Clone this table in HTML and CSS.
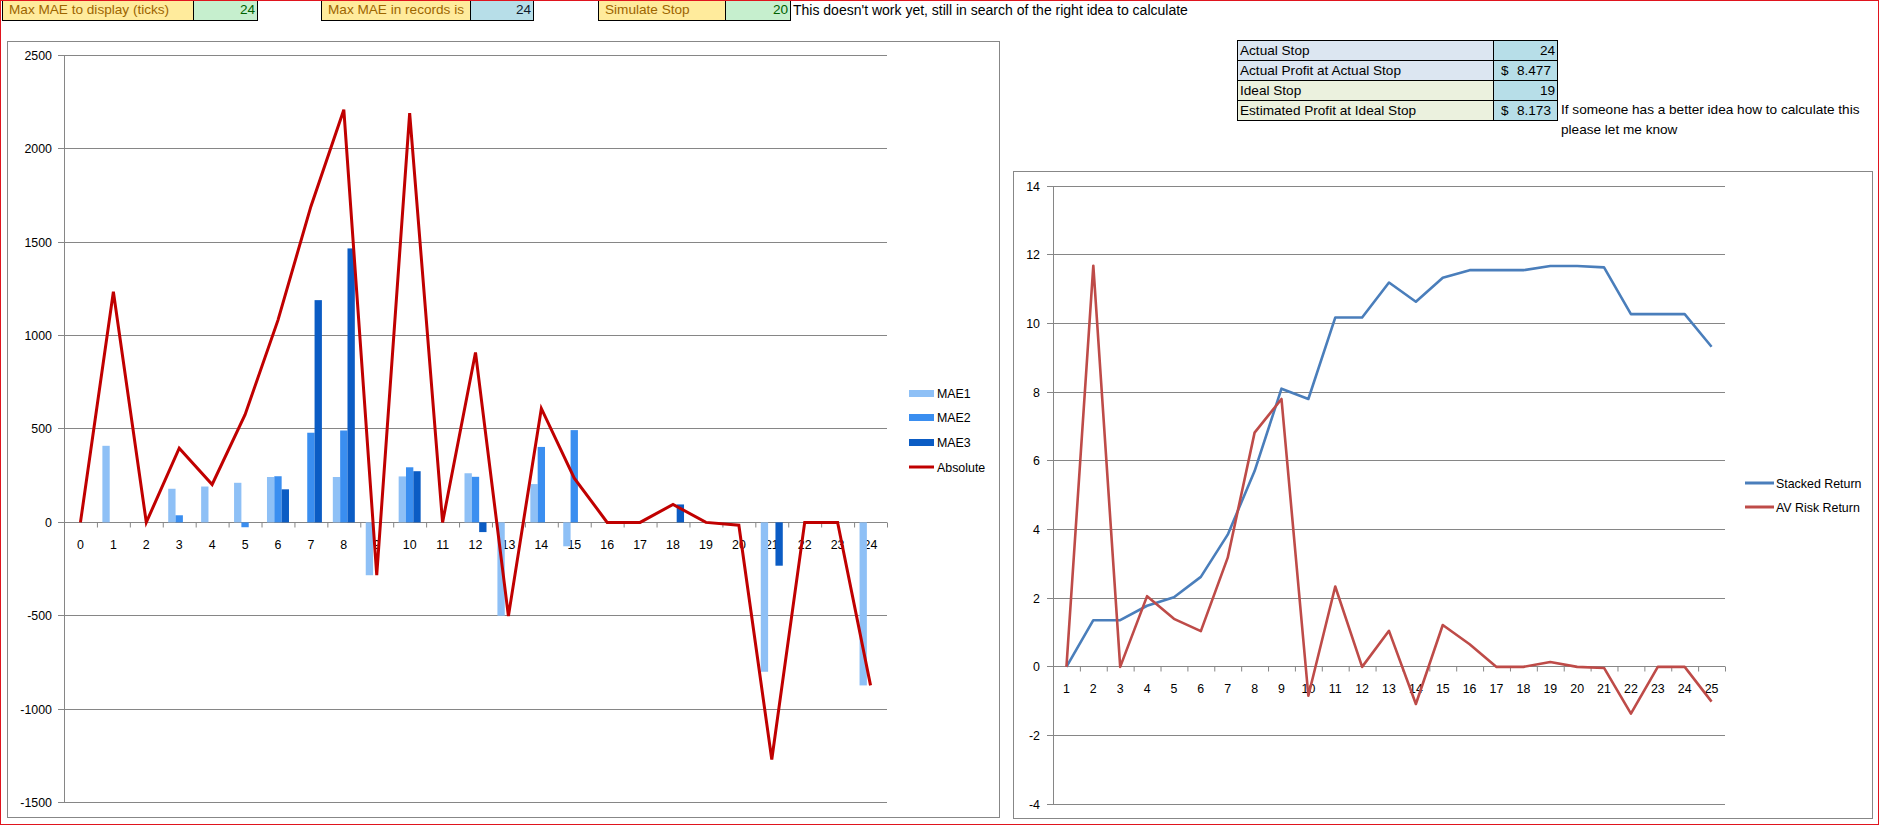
FILE: index.html
```html
<!DOCTYPE html>
<html>
<head>
<meta charset="utf-8">
<link rel="stylesheet" href="styles.css">
</head>
<body>
<div class="page">
  <div class="toprow">
    <div class="grp g1">
      <div class="cell lbl w1">Max MAE to display (ticks)</div>
      <div class="cell val good w2">24</div>
    </div>
    <div class="grp g2">
      <div class="cell lbl w3">Max MAE in records is</div>
      <div class="cell val info w4">24</div>
    </div>
    <div class="grp g3">
      <div class="cell lbl w5">Simulate Stop</div>
      <div class="cell val good w6">20</div>
    </div>
    <div class="remark">This doesn't work yet, still in search of the right idea to calculate</div>
  </div>

  <div class="main">
    <svg class="chart chart1" width="993" height="777" viewBox="0 0 993 777">
      <rect class="frame" x="0.5" y="0.5" width="992" height="776"/>
      <path class="grid" d="M51 14.5H880M51 107.5H880M51 201.5H880M51 294.5H880M51 387.5H880M51 481.5H880M51 574.5H880M51 668.5H880M51 761.5H880M57.5 14.5V761.5"/>
      <line class="ticks" x1="57" y1="484" x2="882" y2="484" stroke-dasharray="1 31.92"/>
      <g class="ylab">
        <text x="45" y="19">2500</text>
        <text x="45" y="112">2000</text>
        <text x="45" y="206">1500</text>
        <text x="45" y="299">1000</text>
        <text x="45" y="392">500</text>
        <text x="45" y="486">0</text>
        <text x="45" y="579">-500</text>
        <text x="45" y="673">-1000</text>
        <text x="45" y="766">-1500</text>
      </g>
      <g class="xlab">
        <text x="73.5" y="507.5">0</text><text x="106.4" y="507.5">1</text><text x="139.3" y="507.5">2</text>
        <text x="172.2" y="507.5">3</text><text x="205.1" y="507.5">4</text><text x="238.1" y="507.5">5</text>
        <text x="271" y="507.5">6</text><text x="303.9" y="507.5">7</text><text x="336.8" y="507.5">8</text>
        <text x="369.7" y="507.5">9</text><text x="402.7" y="507.5">10</text><text x="435.6" y="507.5">11</text>
        <text x="468.5" y="507.5">12</text><text x="501.4" y="507.5">13</text><text x="534.3" y="507.5">14</text>
        <text x="567.3" y="507.5">15</text><text x="600.2" y="507.5">16</text><text x="633.1" y="507.5">17</text>
        <text x="666" y="507.5">18</text><text x="698.9" y="507.5">19</text><text x="731.9" y="507.5">20</text>
        <text x="764.8" y="507.5">21</text><text x="797.7" y="507.5">22</text><text x="830.6" y="507.5">23</text>
        <text x="863.5" y="507.5">24</text>
      </g>
      <g transform="translate(57 481.375) scale(32.92 -0.18675)">
        <g class="b1">
          <rect x="1.1658" y="0" width="0.2228" height="410"/>
          <rect x="3.1658" y="0" width="0.2228" height="180"/>
          <rect x="4.1658" y="0" width="0.2228" height="192"/>
          <rect x="5.1658" y="0" width="0.2228" height="212"/>
          <rect x="6.1658" y="0" width="0.2228" height="243"/>
          <rect x="8.1658" y="0" width="0.2228" height="243"/>
          <rect x="9.1658" y="-283" width="0.2228" height="283"/>
          <rect x="10.1658" y="0" width="0.2228" height="246"/>
          <rect x="12.1658" y="0" width="0.2228" height="263"/>
          <rect x="13.1658" y="-500" width="0.2228" height="500"/>
          <rect x="14.1658" y="0" width="0.2228" height="205"/>
          <rect x="15.1658" y="-128" width="0.2228" height="128"/>
          <rect x="21.1658" y="-800" width="0.2228" height="800"/>
          <rect x="24.1658" y="-873" width="0.2228" height="873"/>
        </g>
        <g class="b2">
          <rect x="3.3886" y="0" width="0.2228" height="38"/>
          <rect x="5.3886" y="-26" width="0.2228" height="26"/>
          <rect x="6.3886" y="0" width="0.2228" height="247"/>
          <rect x="7.3886" y="0" width="0.2228" height="480"/>
          <rect x="8.3886" y="0" width="0.2228" height="492"/>
          <rect x="10.3886" y="0" width="0.2228" height="295"/>
          <rect x="12.3886" y="0" width="0.2228" height="244"/>
          <rect x="14.3886" y="0" width="0.2228" height="404"/>
          <rect x="15.3886" y="0" width="0.2228" height="494"/>
        </g>
        <g class="b3">
          <rect x="6.6114" y="0" width="0.2228" height="177"/>
          <rect x="7.6114" y="0" width="0.2228" height="1190"/>
          <rect x="8.6114" y="0" width="0.2228" height="1467"/>
          <rect x="10.6114" y="0" width="0.2228" height="274"/>
          <rect x="12.6114" y="-52" width="0.2228" height="52"/>
          <rect x="18.6114" y="0" width="0.2228" height="96"/>
          <rect x="21.6114" y="-232" width="0.2228" height="232"/>
        </g>
        <polyline class="absline" points="0.5,0 1.5,1235 2.5,0 3.5,397 4.5,203 5.5,577 6.5,1083 7.5,1692 8.5,2210 9.5,-282 10.5,2192 11.5,0 12.5,910 13.5,-502 14.5,610 15.5,237 16.5,0 17.5,0 18.5,96 19.5,0 20.5,-15 21.5,-1270 22.5,0 23.5,0 24.5,-873"/>
      </g>
      <g class="legend">
        <rect class="b1" x="902" y="349" width="25" height="7"/>
        <text x="930" y="356.5">MAE1</text>
        <rect class="b2" x="902" y="373" width="25" height="7"/>
        <text x="930" y="380.5">MAE2</text>
        <rect class="b3" x="902" y="398" width="25" height="7"/>
        <text x="930" y="405.5">MAE3</text>
        <line class="abslegend" x1="902" y1="426" x2="927" y2="426"/>
        <text x="930" y="430.5">Absolute</text>
      </g>
    </svg>

    <div class="side">
      <div class="statsrow">
        <div class="stats">
          <div class="sc slbl blue">Actual Stop</div>
          <div class="sc sval">24</div>
          <div class="sc slbl blue">Actual Profit at Actual Stop</div>
          <div class="sc sval money"><span>$</span><span>8.477</span></div>
          <div class="sc slbl green">Ideal Stop</div>
          <div class="sc sval">19</div>
          <div class="sc slbl green">Estimated Profit at Ideal Stop</div>
          <div class="sc sval money"><span>$</span><span>8.173</span></div>
        </div>
        <div class="note">If someone has a better idea how to calculate this<br>please let me know</div>
      </div>

      <svg class="chart chart2" width="860" height="648" viewBox="0 0 860 648">
        <rect class="frame" x="0.5" y="0.5" width="859" height="647"/>
        <path class="grid" d="M34 15.5H712M34 83.5H712M34 152.5H712M34 221.5H712M34 289.5H712M34 358.5H712M34 427.5H712M34 495.5H712M34 564.5H712M34 633.5H712M40.5 15.5V633.5"/>
        <line class="ticks" x1="40" y1="498" x2="713" y2="498" stroke-dasharray="1 25.88"/>
        <g class="ylab">
          <text x="27" y="20">14</text>
          <text x="27" y="88">12</text>
          <text x="27" y="157">10</text>
          <text x="27" y="226">8</text>
          <text x="27" y="294">6</text>
          <text x="27" y="363">4</text>
          <text x="27" y="432">2</text>
          <text x="27" y="500">0</text>
          <text x="27" y="569">-2</text>
          <text x="27" y="638">-4</text>
        </g>
        <g class="xlab">
          <text x="53.4" y="521.5">1</text><text x="80.3" y="521.5">2</text><text x="107.2" y="521.5">3</text>
          <text x="134.1" y="521.5">4</text><text x="161" y="521.5">5</text><text x="187.8" y="521.5">6</text>
          <text x="214.7" y="521.5">7</text><text x="241.6" y="521.5">8</text><text x="268.5" y="521.5">9</text>
          <text x="295.4" y="521.5">10</text><text x="322.2" y="521.5">11</text><text x="349.1" y="521.5">12</text>
          <text x="376" y="521.5">13</text><text x="402.9" y="521.5">14</text><text x="429.8" y="521.5">15</text>
          <text x="456.6" y="521.5">16</text><text x="483.5" y="521.5">17</text><text x="510.4" y="521.5">18</text>
          <text x="537.3" y="521.5">19</text><text x="564.2" y="521.5">20</text><text x="591" y="521.5">21</text>
          <text x="617.9" y="521.5">22</text><text x="644.8" y="521.5">23</text><text x="671.7" y="521.5">24</text>
          <text x="698.6" y="521.5">25</text>
        </g>
        <g transform="translate(40 495.9) scale(26.88 -34.35)">
          <polyline class="stacked" points="0.5,0 1.5,1.36 2.5,1.36 3.5,1.78 4.5,2.03 5.5,2.62 6.5,3.85 7.5,5.7 8.5,8.1 9.5,7.8 10.5,10.17 11.5,10.17 12.5,11.19 13.5,10.63 14.5,11.33 15.5,11.55 16.5,11.55 17.5,11.55 18.5,11.67 19.5,11.67 20.5,11.63 21.5,10.27 22.5,10.27 23.5,10.27 24.5,9.32"/>
          <polyline class="avrisk" points="0.5,0 1.5,11.68 2.5,0 3.5,2.06 4.5,1.4 5.5,1.04 6.5,3.18 7.5,6.82 8.5,7.8 9.5,-0.84 10.5,2.34 11.5,0 12.5,1.05 13.5,-1.08 14.5,1.22 15.5,0.66 16.5,0 17.5,0 18.5,0.14 19.5,0 20.5,-0.03 21.5,-1.36 22.5,0 23.5,0 24.5,-1.01"/>
        </g>
        <g class="legend">
          <line class="stackedleg" x1="732" y1="312" x2="761" y2="312"/>
          <text x="763" y="316.5">Stacked Return</text>
          <line class="avleg" x1="732" y1="336" x2="761" y2="336"/>
          <text x="763" y="340.5">AV Risk Return</text>
        </g>
      </svg>
    </div>
  </div>
</div>
</body>
</html>
```

FILE: styles.css
```css
body {
  margin: 0;
  background: #ffffff;
}

.page {
  position: relative;
  width: 1879px;
  height: 825px;
  overflow: hidden;
  background: #ffffff;
  font-family: "Liberation Sans", Arial, sans-serif;
  font-size: 13.6px;
  color: #000000;
}

.page::after {
  content: "";
  position: absolute;
  inset: 0;
  border: 1px solid #e0141e;
  pointer-events: none;
}

/* ---------- top row of spreadsheet cells ---------- */
.toprow {
  display: flex;
  align-items: flex-start;
  height: 21px;
}

.grp {
  display: flex;
  border-left: 1px solid #000000;
}

.g1 { margin-left: 2px; }
.g2 { margin-left: 63px; }
.g3 { margin-left: 64px; }

.cell {
  box-sizing: border-box;
  height: 21px;
  line-height: 20px;
  border-right: 1px solid #000000;
  border-bottom: 1px solid #000000;
  white-space: nowrap;
  overflow: hidden;
}

.lbl {
  background: #ffeb9c;
  color: #9c6500;
  padding-left: 6px;
}

.val {
  text-align: right;
  padding-right: 2px;
}

.good {
  background: #c6efce;
  color: #006100;
}

.info {
  background: #b7dee8;
  color: #0f1a2b;
}

.w1 { width: 191px; }
.w2 { width: 64px; }
.w3 { width: 149px; }
.w4 { width: 63px; }
.w5 { width: 127px; }
.w6 { width: 65px; }

.remark {
  margin-left: 2px;
  line-height: 20px;
  font-size: 14px;
  white-space: nowrap;
}

/* ---------- main area ---------- */
.main {
  display: flex;
  align-items: flex-start;
}

.chart {
  display: block;
  flex: none;
}

.chart1 {
  margin: 20px 0 0 7px;
}

.side {
  display: flex;
  flex-direction: column;
  margin: 19px 0 0 13px;
  width: 860px;
}

.statsrow {
  display: flex;
  align-items: flex-start;
  margin-left: 224px;
  height: 100px;
}

.stats {
  display: grid;
  grid-template-columns: 256px 64px;
  border-top: 1px solid #000000;
  border-left: 1px solid #000000;
}

.sc {
  box-sizing: border-box;
  height: 20px;
  line-height: 19px;
  border-right: 1px solid #000000;
  border-bottom: 1px solid #000000;
  white-space: nowrap;
}

.slbl {
  padding-left: 2px;
}

.blue { background: #dce6f1; }
.green { background: #ebf1de; }

.sval {
  background: #b7dee8;
  text-align: right;
  padding-right: 2px;
}

.money {
  display: flex;
  justify-content: space-between;
  padding-left: 7px;
  padding-right: 6px;
}

.note {
  margin-left: 3px;
  padding-top: 60px;
  line-height: 20px;
  white-space: nowrap;
}

.chart2 {
  margin-top: 31px;
}

/* ---------- chart drawing ---------- */
.chart text {
  font-family: "Liberation Sans", Arial, sans-serif;
  font-size: 12.4px;
  fill: #000000;
}

.frame {
  fill: #ffffff;
  stroke: #878787;
  stroke-width: 1;
}

.grid {
  fill: none;
  stroke: #868686;
  stroke-width: 1;
}

.ticks {
  stroke: #868686;
  stroke-width: 5;
}

.ylab text {
  text-anchor: end;
}

.xlab text {
  text-anchor: middle;
}

.b1 { fill: #8ec0f6; }
.b2 { fill: #3a8ef0; }
.b3 { fill: #0b5cc4; }

.absline {
  fill: none;
  stroke: #c00000;
  stroke-width: 3;
  stroke-linejoin: miter;
  vector-effect: non-scaling-stroke;
}

.abslegend {
  stroke: #c00000;
  stroke-width: 3;
}

.stacked {
  fill: none;
  stroke: #4a7ebb;
  stroke-width: 2.6;
  stroke-linejoin: round;
  vector-effect: non-scaling-stroke;
}

.avrisk {
  fill: none;
  stroke: #be4b48;
  stroke-width: 2.6;
  stroke-linejoin: round;
  vector-effect: non-scaling-stroke;
}

.stackedleg {
  stroke: #4a7ebb;
  stroke-width: 3;
}

.avleg {
  stroke: #be4b48;
  stroke-width: 3;
}
```
